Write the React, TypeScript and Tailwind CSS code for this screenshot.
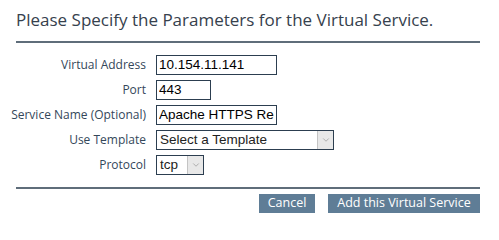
import { ChevronDown } from "lucide-react";

const LABEL = "w-[146px] shrink-0 text-right text-[12px] leading-none text-[#34475a]";
const FIELD =
  "h-[20px] border border-[#2c3e50] bg-white px-[2px] text-[13.5px] text-black outline-none font-['Liberation_Sans',Arial,sans-serif]";

function FakeSelect({ value, width }: { value: string; width: string }) {
  return (
    <div className={`flex h-[20px] items-stretch border border-[#2c3e50] bg-white ${width}`}>
      <span className="flex flex-1 items-center px-[3px] text-[13.5px] text-[#222] font-['Liberation_Sans',Arial,sans-serif]">
        {value}
      </span>
      <span className="flex w-[16px] items-center justify-center border-l border-[#c4c4c4] bg-[#e8e8e8] text-[#8a8a8a]">
        <ChevronDown size={10} strokeWidth={1.5} />
      </span>
    </div>
  );
}

export default function App() {
  return (
    <div className="h-[224px] w-[499px] bg-white px-4 pt-[9px] font-['Open_Sans','Noto_Sans',sans-serif]">
      <div className="w-[464px]">
        <h1 className="text-[17px] leading-[22px] text-[#36414d]">
          Please Specify the Parameters for the Virtual Service.
        </h1>
        <div className="mt-[10px] h-[2px] bg-[#5f6d7a]" />

        <div className="-ml-4 mt-[12px] flex flex-col gap-[5px]">
          <div className="flex items-center gap-[10px]">
            <span className={LABEL}>Virtual Address</span>
            <input className={`${FIELD} w-[121px]`} defaultValue="10.154.11.141" />
          </div>
          <div className="flex items-center gap-[10px]">
            <span className={LABEL}>Port</span>
            <input className={`${FIELD} w-[55px]`} defaultValue="443" />
          </div>
          <div className="flex items-center gap-[10px]">
            <span className={LABEL}>Service Name (Optional)</span>
            <input className={`${FIELD} w-[121px]`} defaultValue="Apache HTTPS Reencrypt" />
          </div>
          <div className="flex items-center gap-[10px]">
            <span className={LABEL}>Use Template</span>
            <FakeSelect value="Select a Template" width="w-[178px]" />
          </div>
          <div className="flex items-center gap-[10px]">
            <span className={LABEL}>Protocol</span>
            <FakeSelect value="tcp" width="w-[48px]" />
          </div>
        </div>

        <div className="mt-[12px] h-[2px] bg-[#5f6d7a]" />

        <div className="mt-[5px] flex justify-end gap-[13px]">
          <button className="h-[19px] w-[56px] bg-[#5f7d96] text-[12.5px] leading-none text-white">
            Cancel
          </button>
          <button className="h-[19px] w-[152px] bg-[#5f7d96] text-[12.5px] leading-none text-white">
            Add this Virtual Service
          </button>
        </div>
      </div>
    </div>
  );
}
